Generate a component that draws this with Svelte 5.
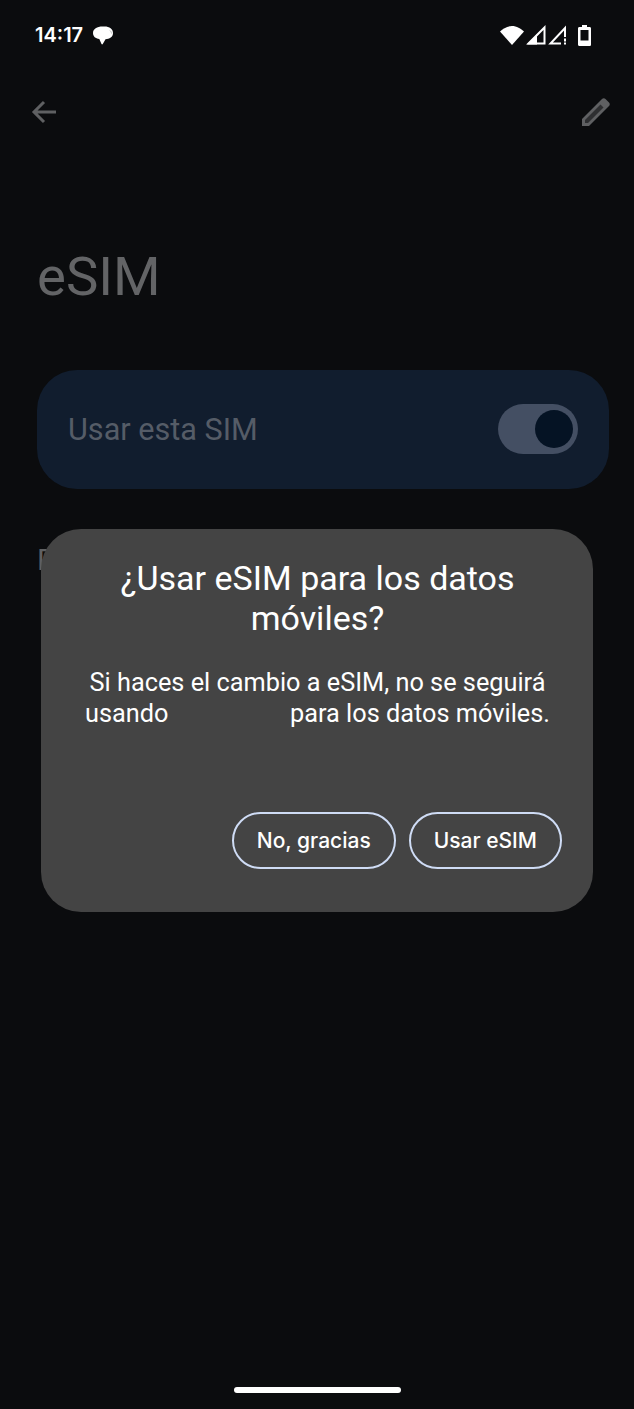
<script>
  const secondary = 'No, gracias';
  const primary = 'Usar eSIM';
</script>

<div class="screen">
  <header class="status">
    <div class="status-left">
      <span class="time">14:17</span>
      <svg class="bubble" viewBox="0 0 20 19" width="20" height="19">
        <path d="M9.500 0.500h2C16.500 0.500 20 3 20 7s-3.500 6-7.500 6.300L9.800 18c-.4.600-1 .6-1.300 0L6.300 13C2.500 12.500 0 10.500 0 7 0 3 4 0.500 9.500 0.500z" fill="#fff" />
        <path d="M17 4.500c1 1 1.500 2 1.500 3" fill="none" stroke="#bbb" stroke-width="1" />
      </svg>
    </div>
    <div class="status-right">
      <svg class="wifi" viewBox="0 0 24 20" width="24" height="20">
        <path d="M0 6.500C3 3.500 7.500 1 12 1s9 2.500 12 5.500L12 20z" fill="#fff" />
      </svg>
      <svg viewBox="0 0 20 20" width="20" height="20">
        <path d="M2.500 18.500 18.500 2.500v16z" fill="none" stroke="#fff" stroke-width="2" />
        <path d="M1 19.500 11 9.500v10z" fill="#fff" />
      </svg>
      <svg viewBox="0 0 20 20" width="20" height="20">
        <path d="M13 18.500H2.500L17 3v9" fill="none" stroke="#fff" stroke-width="2" />
        <path d="M17 13.500v3M17 17.500v2" stroke="#fff" stroke-width="2" />
      </svg>
      <svg class="battery" viewBox="0 0 13 21" width="13" height="21">
        <path d="M4 0h5v2h2.500c1 0 1.500.6 1.500 1.500V19.500c0 1-.6 1.500-1.500 1.500h-10C.5 21 0 20.400 0 19.500V3.500C0 2.600.5 2 1.500 2H4z" fill="#fff" />
        <rect x="2.500" y="5" width="8" height="10.500" fill="#0b0c0e" />
      </svg>
    </div>
  </header>

  <nav class="toolbar">
    <svg viewBox="0 0 26 24" width="26" height="24">
      <path d="M25 12H3M13 2 3 12l10 10" fill="none" stroke="#5f6062" stroke-width="3" />
    </svg>
    <svg viewBox="0 0 30 30" width="30" height="30">
      <path d="M1 29v-7L21 2c1-1 2.500-1 3.500 0l3.500 3.500c1 1 1 2.500 0 3.500L8 29z" fill="#5f6062" />
      <path d="M4 26v-3L19.500 7.500l3 3L7 26z" fill="#2e2f31" />
    </svg>
  </nav>

  <h1 class="title">eSIM</h1>

  <section class="sim-card">
    <span class="sim-label">Usar esta SIM</span>
    <div class="switch"><span class="thumb"></span></div>
  </section>

  <p class="pref">P</p>

  <div class="handle"></div>

  <div class="dialog">
    <h2>¿Usar eSIM para los datos móviles?</h2>
    <p>Si haces el cambio a eSIM, no se seguirá usando <span class="blank"></span> para los datos móviles.</p>
    <div class="actions">
      <button>{secondary}</button>
      <button>{primary}</button>
    </div>
  </div>
</div>

<style>
  :global(body) {
    margin: 0;
    background: #0b0c0e;
  }

  .screen {
    position: relative;
    width: 634px;
    height: 1409px;
    overflow: hidden;
    background: #0b0c0e;
    font-family: Roboto, sans-serif;
  }

  .status {
    display: flex;
    justify-content: space-between;
    align-items: center;
    height: 28px;
    padding: 21px 43px 0 35px;
  }

  .status-left {
    display: flex;
    align-items: center;
    gap: 10px;
  }

  .time {
    color: #fff;
    font-size: 20px;
    font-weight: 600;
    font-family: Inter, sans-serif;
  }

  .status-right {
    display: flex;
    align-items: center;
    gap: 2px;
  }

  .battery {
    margin-left: 8px;
  }

  .toolbar {
    display: flex;
    justify-content: space-between;
    align-items: center;
    padding: 48px 23px 0 31px;
  }

  .title {
    margin: 119px 0 0 37px;
    height: 60px;
    color: #636466;
    font-size: 54.500px;
    line-height: 60px;
    font-weight: 400;
  }

  .sim-card {
    display: flex;
    justify-content: space-between;
    align-items: center;
    box-sizing: border-box;
    width: 572px;
    height: 119px;
    margin: 64px 0 0 37px;
    padding: 0 31px 0 31px;
    border-radius: 40px;
    background: #111d2e;
  }

  .sim-label {
    color: #555c67;
    font-size: 30.600px;
  }

  .switch {
    display: flex;
    justify-content: flex-end;
    align-items: center;
    box-sizing: border-box;
    width: 80px;
    height: 50px;
    margin-bottom: 2px;
    padding-right: 5px;
    border-radius: 25px;
    background: #444f63;
  }

  .thumb {
    width: 38px;
    height: 38px;
    border-radius: 50%;
    background: #051324;
  }

  .pref {
    margin: 53px 0 0 37px;
    color: #5f6062;
    font-size: 30px;
  }

  .handle {
    position: absolute;
    left: 234px;
    top: 1387px;
    width: 167px;
    height: 6px;
    border-radius: 3px;
    background: #fff;
  }

  .dialog {
    position: absolute;
    left: 41px;
    top: 529px;
    box-sizing: border-box;
    width: 552px;
    height: 383px;
    padding: 29px 31px 0 32px;
    border-radius: 40px;
    background: #444;
    text-align: center;
    color: #fff;
  }

  .dialog h2 {
    margin: 0;
    padding: 0 20px;
    font-size: 34px;
    line-height: 40px;
    font-weight: 400;
  }

  .dialog p {
    margin: 29px 0 0;
    font-size: 25.300px;
    line-height: 31px;
  }

  .blank {
    display: inline-block;
    width: 109px;
  }

  .actions {
    display: flex;
    justify-content: flex-end;
    gap: 13px;
    margin-top: 83px;
  }

  button {
    height: 57px;
    padding: 0 23px;
    border: 2px solid #cfdcf5;
    border-radius: 29px;
    background: transparent;
    color: #fff;
    font-family: Inter, sans-serif;
    font-size: 21px;
    font-weight: 500;
  }
</style>
